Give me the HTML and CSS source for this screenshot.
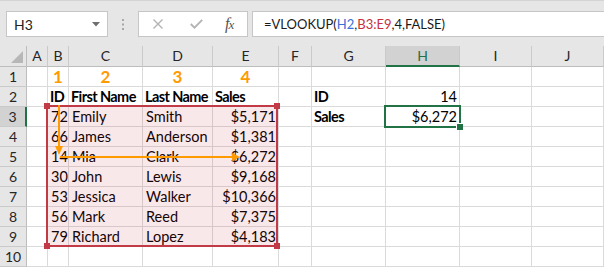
FILE: index.html
```html
<!DOCTYPE html>
<html>
<head>
<meta charset="utf-8">
<link rel="stylesheet" href="styles.css">
</head>
<body>
<div class="app">
  <div class="toolbar">
    <div class="namebox">
      <span class="nb-text">H3</span>
      <svg class="nb-arrow" width="8" height="5" viewBox="0 0 8 5"><path d="M0 0 L8 0 L4 4.5 Z" fill="#6e6e6e"/></svg>
    </div>
    <div class="grip">
      <svg width="3" height="11" viewBox="0 0 3 11"><rect x="0" y="0" width="2" height="2" fill="#a8a8a8"/><rect x="0" y="4.5" width="2" height="2" fill="#a8a8a8"/><rect x="0" y="9" width="2" height="2" fill="#a8a8a8"/></svg>
    </div>
    <div class="fxbox">
      <svg class="ic-x" width="10" height="10" viewBox="0 0 10 10"><path d="M0.5 0.5 L9.5 9.5 M9.5 0.5 L0.5 9.5" stroke="#b3b3b3" stroke-width="1.4" fill="none"/></svg>
      <svg class="ic-check" width="13" height="10" viewBox="0 0 13 10"><path d="M0.8 5 L4.5 8.7 L12.2 0.8" stroke="#b3b3b3" stroke-width="1.8" fill="none"/></svg>
      <span class="fx">f<span class="fx-x">x</span></span>
    </div>
    <div class="formula">=VLOOKUP(<span class="ref-blue">H2</span>,<span class="ref-red">B3:E9</span>,4,FALSE)</div>
  </div>

  <div class="sheet">
    <div class="corner"><svg width="12" height="12" viewBox="0 0 12 12"><path d="M12 0 L12 12 L0 12 Z" fill="#b7b7b7"/></svg></div>
    <div class="ch">A</div><div class="ch">B</div><div class="ch">C</div><div class="ch">D</div><div class="ch">E</div><div class="ch">F</div><div class="ch">G</div><div class="ch ch-sel">H</div><div class="ch">I</div><div class="ch">J</div>

    <div class="rh">1</div><div class="c"></div><div class="c num-o">1</div><div class="c num-o">2</div><div class="c num-o">3</div><div class="c num-o">4</div><div class="c"></div><div class="c"></div><div class="c"></div><div class="c"></div><div class="c"></div>

    <div class="rh">2</div><div class="c"></div><div class="c b">ID</div><div class="c b">First Name</div><div class="c b">Last Name</div><div class="c b">Sales</div><div class="c"></div><div class="c b">ID</div><div class="c r">14</div><div class="c"></div><div class="c"></div>

    <div class="rh rh-sel">3</div><div class="c"></div><div class="c r">72</div><div class="c">Emily</div><div class="c">Smith</div><div class="c r">$5,171</div><div class="c"></div><div class="c b">Sales</div><div class="c r">$6,272</div><div class="c"></div><div class="c"></div>

    <div class="rh">4</div><div class="c"></div><div class="c r">66</div><div class="c">James</div><div class="c">Anderson</div><div class="c r">$1,381</div><div class="c"></div><div class="c"></div><div class="c"></div><div class="c"></div><div class="c"></div>

    <div class="rh">5</div><div class="c"></div><div class="c r">14</div><div class="c">Mia</div><div class="c">Clark</div><div class="c r">$6,272</div><div class="c"></div><div class="c"></div><div class="c"></div><div class="c"></div><div class="c"></div>

    <div class="rh">6</div><div class="c"></div><div class="c r">30</div><div class="c">John</div><div class="c">Lewis</div><div class="c r">$9,168</div><div class="c"></div><div class="c"></div><div class="c"></div><div class="c"></div><div class="c"></div>

    <div class="rh">7</div><div class="c"></div><div class="c r">53</div><div class="c">Jessica</div><div class="c">Walker</div><div class="c r">$10,366</div><div class="c"></div><div class="c"></div><div class="c"></div><div class="c"></div><div class="c"></div>

    <div class="rh">8</div><div class="c"></div><div class="c r">56</div><div class="c">Mark</div><div class="c">Reed</div><div class="c r">$7,375</div><div class="c"></div><div class="c"></div><div class="c"></div><div class="c"></div><div class="c"></div>

    <div class="rh">9</div><div class="c"></div><div class="c r">79</div><div class="c">Richard</div><div class="c">Lopez</div><div class="c r">$4,183</div><div class="c"></div><div class="c"></div><div class="c"></div><div class="c"></div><div class="c"></div>

    <div class="rh">10</div><div class="c"></div><div class="c"></div><div class="c"></div><div class="c"></div><div class="c"></div><div class="c"></div><div class="c"></div><div class="c"></div><div class="c"></div><div class="c"></div>

    <div class="range">
      <span class="hnd hnd-tl"></span><span class="hnd hnd-tr"></span><span class="hnd hnd-bl"></span><span class="hnd hnd-br"></span>
    </div>
    <div class="active"><span class="fill-handle"></span></div>
  </div>

  <svg class="arrows" width="604" height="267" viewBox="0 0 604 267">
    <line x1="59" y1="105" x2="59" y2="147" stroke="#ff9a00" stroke-width="2"/>
    <polygon points="55,146 63,146 59,155" fill="#ff9a00"/>
    <line x1="60" y1="157" x2="233" y2="157" stroke="#ff9a00" stroke-width="2"/>
    <polygon points="232,153 232,161 240,157" fill="#ff9a00"/>
  </svg>
</div>
</body>
</html>
```

FILE: styles.css
```css
* { box-sizing: border-box; }

body {
  margin: 0;
  width: 604px;
  height: 267px;
  overflow: hidden;
  background: #ffffff;
  font-family: Lato, "Liberation Sans", sans-serif;
  color: #000;
}

.app {
  position: relative;
  width: 604px;
  height: 267px;
}

/* ---------- formula bar ---------- */
.toolbar {
  height: 46px;
  background: #e6e6e6;
  border-top: 1px solid #d4d4d4;
  padding-top: 10px;
  display: flex;
  align-items: flex-start;
}

.namebox {
  margin-left: 6px;
  width: 102px;
  height: 26px;
  background: #fff;
  border: 1px solid #c6c6c6;
  display: flex;
  align-items: center;
  padding-left: 7px;
  padding-right: 7px;
}

.nb-text {
  flex: 1;
  font-size: 14px;
  color: #222;
}

.grip {
  width: 30px;
  height: 26px;
  display: flex;
  align-items: center;
  justify-content: center;
}

.fxbox {
  width: 110px;
  height: 26px;
  background: #fff;
  border: 1px solid #c6c6c6;
  display: flex;
  align-items: center;
  padding-left: 14px;
}

.ic-x { margin-right: 27px; }
.ic-check { margin-right: 22px; }

.fx {
  font-family: "Liberation Serif", serif;
  font-style: italic;
  font-size: 16px;
  color: #555;
  letter-spacing: -1px;
}
.fx-x { font-size: 13px; }

.formula {
  flex: 1;
  margin-left: 4px;
  height: 26px;
  background: #fff;
  border: 1px solid #c6c6c6;
  border-right: none;
  padding-left: 11px;
  font-size: 13px;
  line-height: 24px;
  color: #1a1a1a;
  white-space: nowrap;
}

.ref-blue { color: #3a6fd8; }
.ref-red { color: #c8303f; }

/* ---------- grid ---------- */
.sheet {
  position: relative;
  display: grid;
  grid-template-columns: 27px 21px 21px 74px 70px 66px 33px 74px 74px 72px 72px;
  grid-template-rows: 21px repeat(10, 20px);
}

.corner {
  background: #e6e6e6;
  border-right: 1px solid #bdbdbd;
  border-bottom: 1px solid #bdbdbd;
  display: flex;
  align-items: flex-end;
  justify-content: flex-end;
  padding: 0 3px 3px 0;
}

.ch {
  background: #e6e6e6;
  border-right: 1px solid #cacaca;
  border-bottom: 1px solid #bdbdbd;
  text-align: center;
  font-size: 14px;
  line-height: 20px;
  color: #262626;
}

.ch-sel {
  background: #d2d2d2;
  border-bottom: 2px solid #217346;
  color: #217346;
}

.rh {
  background: #e6e6e6;
  border-right: 1px solid #bdbdbd;
  border-bottom: 1px solid #cacaca;
  text-align: center;
  font-size: 14px;
  line-height: 19px;
  color: #262626;
}

.rh-sel {
  background: #d2d2d2;
  border-right: 2px solid #217346;
}

.c {
  border-right: 1px solid #dadada;
  border-bottom: 1px solid #dadada;
  font-size: 14.5px;
  line-height: 19px;
  padding: 0 2px 0 3px;
  white-space: nowrap;
  overflow: visible;
}

.c.b {
  font-weight: 700;
  letter-spacing: -0.6px;
  padding-left: 2px;
}
.c.r { text-align: right; }

.c.num-o {
  text-align: center;
  font-weight: 700;
  font-size: 17px;
  letter-spacing: 0;
  color: #ff9a00;
  padding: 0;
}

/* ---------- overlays ---------- */
.range {
  position: absolute;
  left: 46px;
  top: 59px;
  width: 232px;
  height: 142px;
  border: 2px solid #c23a45;
  background: rgba(200, 50, 62, 0.11);
}

.hnd {
  position: absolute;
  width: 6px;
  height: 6px;
  background: #c23a45;
}
.hnd-tl { left: -4px; top: -4px; }
.hnd-tr { right: -4px; top: -4px; }
.hnd-bl { left: -4px; bottom: -4px; }
.hnd-br { right: -4px; bottom: -4px; }

.active {
  position: absolute;
  left: 384px;
  top: 59px;
  width: 77px;
  height: 23px;
  border: 2px solid #217346;
}

.fill-handle {
  position: absolute;
  right: -4px;
  bottom: -4px;
  width: 6px;
  height: 6px;
  background: #217346;
  box-shadow: -1px -1px 0 #fff;
}

.arrows {
  position: absolute;
  left: 0;
  top: 0;
  pointer-events: none;
}
```
